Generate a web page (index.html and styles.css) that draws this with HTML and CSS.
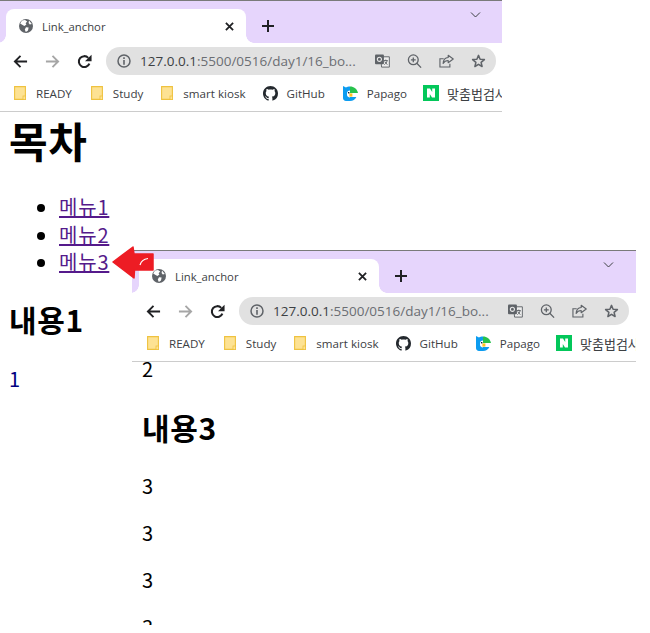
FILE: index.html
```html
<!DOCTYPE html>
<html lang="ko">

<head>
    <meta charset="UTF-8">
    <meta name="viewport" content="width=device-width, initial-scale=1.0" />
    <title>Link_anchor</title>
    <link rel="stylesheet" href="styles.css">
</head>

<body>
    <svg class="defs" width="0" height="0">
        <symbol id="i-globe" viewBox="0 0 14 14">
            <circle cx="7" cy="7" r="7" fill="#5f6368" />
            <path d="M3 1.6 6 1 8.2 2.4 6.6 4.2 7.4 5.4 5.4 7 3.6 6 1.2 4.6ZM7 8.2 9.6 8.6 9 11.4 6.8 13 5.8 10.4ZM10 1.6 12.8 5 10.8 5.6 9.6 4Z" fill="#fff" />
        </symbol>
        <symbol id="i-close" viewBox="0 0 10 10">
            <path d="M1 1 9 9M9 1 1 9" fill="none" stroke="#202124" stroke-width="2" />
        </symbol>
        <symbol id="i-back" viewBox="0 0 16 16">
            <path d="M15 8H2M8 2 2 8l6 6" fill="none" stroke="currentColor" stroke-width="2" />
        </symbol>
        <symbol id="i-fwd" viewBox="0 0 16 16">
            <path d="M1 8h13M8 2l6 6-6 6" fill="none" stroke="currentColor" stroke-width="2" />
        </symbol>
        <symbol id="i-reload" viewBox="0 0 16 16">
            <path d="M13.2 10.2A5.8 5.8 0 1 1 12 4.1" fill="none" stroke="currentColor" stroke-width="2.2" />
            <path d="M15.5 .8v7H8.5Z" fill="currentColor" />
        </symbol>
        <symbol id="i-info" viewBox="0 0 14 14">
            <circle cx="7" cy="7" r="6" fill="none" stroke="#5f6368" stroke-width="1.5" />
            <path d="M6.2 3.3h1.6v1.6H6.2ZM6.2 6h1.6v4.7H6.2Z" fill="#5f6368" />
        </symbol>
        <symbol id="i-trans" viewBox="0 0 16 14">
            <path d="M6 2.5h9.3v11H7Z" fill="#eee" stroke="#5f6368" />
            <rect x="0" y="0" width="9.5" height="10.5" rx="1" fill="#5f6368" />
            <circle cx="4.7" cy="5.2" r="2.2" fill="none" stroke="#e8e8e8" stroke-width="1.2" />
            <path d="M9.5 6.5h4M11.5 5.5v1M13 6.5c-.5 2.5-2 3.8-3 4.3M10.4 7.5c.6 1.5 1.6 2.6 2.9 3.2" fill="none" stroke="#5f6368" />
        </symbol>
        <symbol id="i-zoom" viewBox="0 0 14 14">
            <circle cx="5.8" cy="5.8" r="4.9" fill="none" stroke="#5f6368" stroke-width="1.3" />
            <path d="M9.3 9.3 13.6 13.6M3.4 5.8h4.8M5.8 3.4v4.8" fill="none" stroke="#5f6368" stroke-width="1.3" />
        </symbol>
        <symbol id="i-share" viewBox="0 0 16 14">
            <path d="M5 4.6H1V13.4H11.6V10" fill="none" stroke="#5f6368" stroke-width="1.2" />
            <path d="M9.8 .8 15.2 4.8 9.8 8.8V6.4C7.4 6.4 5.6 7.4 4.4 9.6 4.6 6 6.6 3.4 9.8 3.2Z" fill="none" stroke="#5f6368" stroke-width="1.2" stroke-linejoin="round" />
        </symbol>
        <symbol id="i-star" viewBox="0 0 14 14">
            <path d="M7 1.4 8.6 5.3 12.9 5.6 9.6 8.4 10.6 12.5 7 10.3 3.4 12.5 4.4 8.4 1.1 5.6 5.4 5.3Z" fill="none" stroke="#5f6368" stroke-width="1.5" stroke-linejoin="round" />
        </symbol>
        <symbol id="i-folder" viewBox="0 0 12 14">
            <path d="M.6.6H11.4V13.4H.6Z" fill="#fde293" stroke="#efc23f" stroke-width="1.1" />
            <rect x="9" y="10" width="2.6" height="3.6" fill="#fde293" stroke="#efc23f" stroke-width=".8" />
        </symbol>
        <symbol id="i-github" viewBox="0 0 16 16">
            <path fill="#24292e" d="M8 0C3.58 0 0 3.58 0 8c0 3.54 2.29 6.53 5.47 7.59.4.07.55-.17.55-.38 0-.19-.01-.82-.01-1.49-2.01.37-2.53-.49-2.69-.94-.09-.23-.48-.94-.82-1.13-.28-.15-.68-.52-.01-.53.63-.01 1.08.58 1.23.82.72 1.21 1.87.87 2.33.66.07-.52.28-.87.51-1.07-1.78-.2-3.64-.89-3.64-3.95 0-.87.31-1.59.82-2.15-.08-.2-.36-1.02.08-2.12 0 0 .67-.21 2.2.82.64-.18 1.32-.27 2-.27.68 0 1.36.09 2 .27 1.53-1.04 2.2-.82 2.2-.82.44 1.1.16 1.92.08 2.12.51.56.82 1.27.82 2.15 0 3.07-1.87 3.75-3.65 3.95.29.25.54.73.54 1.48 0 1.07-.01 1.93-.01 2.2 0 .21.15.46.55.38A8.013 8.013 0 0016 8c0-4.42-3.58-8-8-8z" />
        </symbol>
        <symbol id="i-papago" viewBox="0 0 15 15">
            <path d="M0 0 3 1.6C4.2 .8 5.4.6 7 .6V15H3C1.2 15 0 13.6 0 12Z" fill="#0c9cf0" />
            <path d="M7 .6C11 .6 14 3 15 7H7Z" fill="#27c24c" />
            <path d="M7 11H13.4C12 13.6 10 15 7 15Z" fill="#0c9cf0" />
            <path d="M7 4.5A3 3 0 0 0 4 7.5V9C4 10.4 5.5 11.4 7 11.4Z" fill="#fff" />
            <rect x="6.4" y="7.4" width="3" height="3.2" fill="#ffc21f" />
            <rect x="5" y="6" width="1.4" height="1.4" fill="#123" />
        </symbol>
        <symbol id="i-naver" viewBox="0 0 16 16">
            <rect width="16" height="16" fill="#03c75a" />
            <path d="M4 3.5H7L9.2 7V3.5H12V12.5H9L6.8 9V12.5H4Z" fill="#fff" />
        </symbol>
    </svg>

    <div class="window window-one">
        <header class="chrome">
            <div class="tabstrip">
                <div class="tab">
                    <svg class="favicon"><use href="#i-globe" /></svg>
                    <span class="tab-title">Link_anchor</span>
                    <svg class="tab-close"><use href="#i-close" /></svg>
                </div>
                <svg class="new-tab" viewBox="0 0 12 12"><path d="M6 0v12M0 6h12" stroke="#202124" stroke-width="2" /></svg>
                <svg class="tab-menu" viewBox="0 0 10 6"><path d="M.5.5 5 5 9.5.5" fill="none" stroke="#3c4043" /></svg>
            </div>
            <div class="toolbar">
                <svg class="nav"><use href="#i-back" /></svg>
                <svg class="nav nav-off"><use href="#i-fwd" /></svg>
                <svg class="nav"><use href="#i-reload" /></svg>
                <div class="omnibox">
                    <svg class="info"><use href="#i-info" /></svg>
                    <span class="url"><b>127.0.0.1</b>:5500/0516/day1/16_bo...</span>
                    <svg class="act"><use href="#i-trans" /></svg>
                    <svg class="act"><use href="#i-zoom" /></svg>
                    <svg class="act"><use href="#i-share" /></svg>
                    <svg class="act"><use href="#i-star" /></svg>
                </div>
            </div>
            <nav class="bookmarks">
                <a class="mark mark-ready"><svg class="folder"><use href="#i-folder" /></svg>READY</a>
                <a class="mark mark-study"><svg class="folder"><use href="#i-folder" /></svg>Study</a>
                <a class="mark mark-kiosk"><svg class="folder"><use href="#i-folder" /></svg>smart kiosk</a>
                <a class="mark mark-github"><svg class="site"><use href="#i-github" /></svg>GitHub</a>
                <a class="mark mark-papago"><svg class="site"><use href="#i-papago" /></svg>Papago</a>
                <a class="mark mark-naver"><svg class="site site-naver"><use href="#i-naver" /></svg>맞춤법검사기</a>
            </nav>
        </header>
        <main class="page page-top">
            <h1>목차</h1>
            <ul>
                <li><a href="#">메뉴1</a></li>
                <li><a href="#">메뉴2</a></li>
                <li><a href="#">메뉴3</a></li>
            </ul>
            <h2>내용1</h2>
            <p class="first-text">1</p>
        </main>
    </div>

    <div class="window window-two">
        <header class="chrome">
            <div class="tabstrip">
                <div class="tab">
                    <svg class="favicon"><use href="#i-globe" /></svg>
                    <span class="tab-title">Link_anchor</span>
                    <svg class="tab-close"><use href="#i-close" /></svg>
                </div>
                <svg class="new-tab" viewBox="0 0 12 12"><path d="M6 0v12M0 6h12" stroke="#202124" stroke-width="2" /></svg>
                <svg class="tab-menu" viewBox="0 0 10 6"><path d="M.5.5 5 5 9.5.5" fill="none" stroke="#3c4043" /></svg>
            </div>
            <div class="toolbar">
                <svg class="nav"><use href="#i-back" /></svg>
                <svg class="nav nav-off"><use href="#i-fwd" /></svg>
                <svg class="nav"><use href="#i-reload" /></svg>
                <div class="omnibox">
                    <svg class="info"><use href="#i-info" /></svg>
                    <span class="url"><b>127.0.0.1</b>:5500/0516/day1/16_bo...</span>
                    <svg class="act"><use href="#i-trans" /></svg>
                    <svg class="act"><use href="#i-zoom" /></svg>
                    <svg class="act"><use href="#i-share" /></svg>
                    <svg class="act"><use href="#i-star" /></svg>
                </div>
            </div>
            <nav class="bookmarks">
                <a class="mark mark-ready"><svg class="folder"><use href="#i-folder" /></svg>READY</a>
                <a class="mark mark-study"><svg class="folder"><use href="#i-folder" /></svg>Study</a>
                <a class="mark mark-kiosk"><svg class="folder"><use href="#i-folder" /></svg>smart kiosk</a>
                <a class="mark mark-github"><svg class="site"><use href="#i-github" /></svg>GitHub</a>
                <a class="mark mark-papago"><svg class="site"><use href="#i-papago" /></svg>Papago</a>
                <a class="mark mark-naver"><svg class="site site-naver"><use href="#i-naver" /></svg>맞춤법검사기</a>
            </nav>
        </header>
        <main class="page page-scrolled">
            <p class="cut-line">2</p>
            <h2>내용3</h2>
            <p>3</p>
            <p>3</p>
            <p>3</p>
            <p>3</p>
        </main>
    </div>

    <svg class="arrow" viewBox="0 0 42 34">
        <path d="M1 16 21 1 22 8H41V24H22.5L22 32Z" fill="#ed1c24" stroke="#ed1c24" stroke-width="1.5" stroke-linejoin="round" />
        <path d="M28 19C29 15 32 13 36 12.5" fill="none" stroke="#fff" stroke-width="1.2" />
    </svg>
</body>

</html>
```

FILE: styles.css
```css
* {
    box-sizing: border-box;
}

html,
body {
    margin: 0;
    height: 100%;
    background-color: #fff;
}

body {
    position: relative;
    overflow: hidden;
    font-family: "Noto Sans CJK KR", sans-serif;
    color: #000;
}

.defs {
    position: absolute;
}

/* two browser windows lying on a free canvas */
.window {
    position: absolute;
    display: flex;
    flex-direction: column;
    overflow: hidden;
    background-color: #fff;
}

.window-one {
    left: -1px;
    top: 0;
    width: 503px;
    height: 633px;
}

.window-two {
    left: 132px;
    top: 250px;
    width: 504px;
    height: 375px;
}

.chrome {
    flex: none;
    height: 112px;
    border-bottom: 1px solid #ccc;
    font-family: "Open Sans", "Noto Sans CJK KR", sans-serif;
}

.tabstrip {
    display: flex;
    align-items: flex-start;
    height: 43px;
    padding: 8px 0 0 7px;
    background-color: #e6d5fc;
    border-top: 1px solid #7a7a7a;
}

.tab {
    position: relative;
    display: flex;
    align-items: center;
    flex: none;
    width: 240px;
    height: 34px;
    padding: 0 12px 0 13px;
    background-color: #fff;
    border-radius: 8px 8px 0 0;
}

.tab::before,
.tab::after {
    content: "";
    position: absolute;
    bottom: 0;
    width: 8px;
    height: 8px;
}

.tab::before {
    left: -8px;
    background: radial-gradient(circle at 0 0, transparent 7.5px, #fff 8px);
}

.tab::after {
    right: -8px;
    background: radial-gradient(circle at 100% 0, transparent 7.5px, #fff 8px);
}

.favicon {
    width: 14px;
    height: 14px;
    margin-right: 9px;
}

.tab-title {
    flex: 1;
    font-size: 11.3px;
    color: #3c4043;
}

.tab-close {
    width: 9px;
    height: 9px;
}

.new-tab {
    flex: none;
    width: 12px;
    height: 12px;
    margin: 11px 0 0 16px;
}

.tab-menu {
    flex: none;
    width: 11px;
    height: 6px;
    margin: 3px 0 0 196px;
}

.toolbar {
    display: flex;
    align-items: center;
    height: 32px;
    padding: 4px 6px 0 14px;
    color: #202124;
}

.nav {
    flex: none;
    width: 15px;
    height: 15px;
    margin-right: 17px;
}

.nav-off {
    color: #a6a6a6;
}

.omnibox {
    display: flex;
    align-items: center;
    flex: none;
    width: 390px;
    height: 28px;
    margin-left: -3px;
    padding: 0 10px 0 11px;
    background-color: #e1e1e1;
    border-radius: 14px;
}

.info {
    width: 14px;
    height: 14px;
    margin-right: 9px;
}

.url {
    flex: 1;
    font-size: 13.5px;
    color: #6b6e73;
    white-space: nowrap;
    overflow: hidden;
}

.url b {
    font-weight: normal;
    color: #3c4043;
}

.act {
    width: 15px;
    height: 14px;
    margin-left: 17px;
}

.bookmarks {
    display: flex;
    align-items: center;
    height: 36px;
    padding-left: 15px;
    white-space: nowrap;
}

.mark {
    display: flex;
    align-items: center;
    flex: none;
    font-size: 11.6px;
    color: #3c4043;
}

.folder {
    width: 12px;
    height: 14px;
    margin-right: 10px;
}

.site {
    width: 15px;
    height: 15px;
    margin-right: 9px;
}

.site-naver {
    width: 16px;
    height: 16px;
    margin-right: 8px;
}

.mark-ready { margin-right: 19px; }
.mark-study { margin-right: 18px; }
.mark-kiosk { margin-right: 17px; }
.mark-github { margin-right: 18px; }
.mark-papago { margin-right: 16px; }
.mark-naver { font-size: 13px; }

.page {
    flex: 1;
    overflow: hidden;
    padding-left: 10px;
    font-size: 20px;
}

.page-top {
    padding-top: 1px;
}

h1 {
    margin: 0 0 27px;
    font-size: 42px;
    line-height: 53px;
    letter-spacing: .5px;
}

h2 {
    margin: 23px 0 26px;
    font-size: 30px;
    line-height: 40px;
    letter-spacing: .7px;
}

ul {
    margin: 0;
    padding-left: 50px;
}

li {
    line-height: 27.5px;
    letter-spacing: .8px;
}

a {
    color: #551a8b;
}

p {
    margin: 0 0 20px;
    line-height: 27px;
}

.first-text {
    color: #000080;
}

.page-scrolled .cut-line {
    margin-top: -7px;
}

.page-scrolled h2 {
    margin: 25px 0 25px;
}

.arrow {
    position: absolute;
    left: 112px;
    top: 246px;
    width: 42px;
    height: 34px;
}
```
